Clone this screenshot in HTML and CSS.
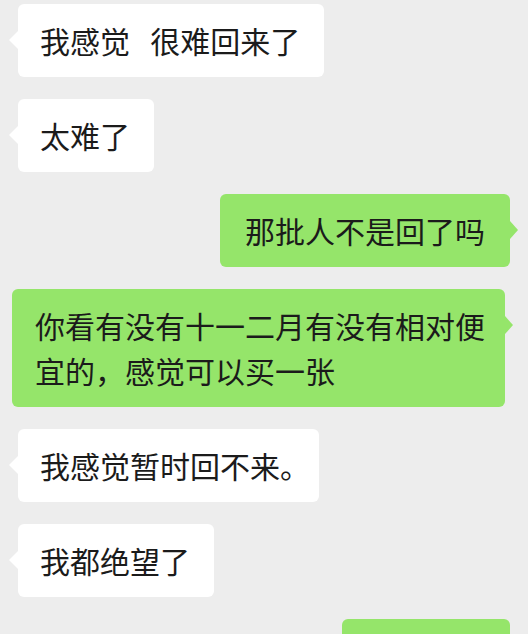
FILE: index.html
```html
<!DOCTYPE html>
<html lang="zh-CN">

<head>
  <meta charset="UTF-8">
  <meta name="viewport" content="width=device-width, initial-scale=1.0">
  <title>聊天记录</title>
  <link rel="stylesheet" href="styles.css">
</head>

<body>
  <div class="chat">
    <div class="bubble left">我感觉   很难回来了</div>
    <div class="bubble left">太难了</div>
    <div class="bubble right">那批人不是回了吗</div>
    <div class="bubble right wide">你看有没有十一二月有没有相对便宜的，感觉可以买一张</div>
    <div class="bubble left">我感觉暂时回不来<span class="half">。</span></div>
    <div class="bubble left">我都绝望了</div>
    <div class="bubble right cut"></div>
  </div>
</body>

</html>
```

FILE: styles.css
```css
html,
body {
  margin: 0;
  padding: 0;
  height: 100%;
  overflow: hidden;
}

body {
  background-color: #ededed;
  font-family: "Noto Sans CJK SC", "Noto Sans", sans-serif;
  color: #1b1b1b;
}

.chat {
  display: flex;
  flex-direction: column;
  gap: 22px;
  padding-top: 4px;
}

.bubble {
  position: relative;
  max-width: 450px;
  padding: 14px 24px 14px 22px;
  border-radius: 6px;
  font-size: 30px;
  line-height: 45px;
  white-space: pre-wrap;
}

/* the little tail pointing at the avatar */
.bubble::before {
  content: '';
  position: absolute;
  top: 27px;
  border-top: 9px solid transparent;
  border-bottom: 9px solid transparent;
}

.bubble.left {
  align-self: flex-start;
  margin-left: 18px;
  background-color: #fff;
}

.bubble.left::before {
  left: -9px;
  border-right: 9px solid #fff;
}

.bubble.right {
  align-self: flex-end;
  margin-right: 18px;
  padding: 14px 25px 14px 25px;
  background-color: #95e56a;
}

.bubble.right::before {
  right: -8px;
  border-left: 8px solid #95e56a;
}

.bubble.wide {
  margin-right: 23px;
  padding: 14px 20px 14px 23px;
}

.bubble.cut {
  width: 118px;
  height: 45px;
}

.half {
  font-feature-settings: "halt";
}
```
